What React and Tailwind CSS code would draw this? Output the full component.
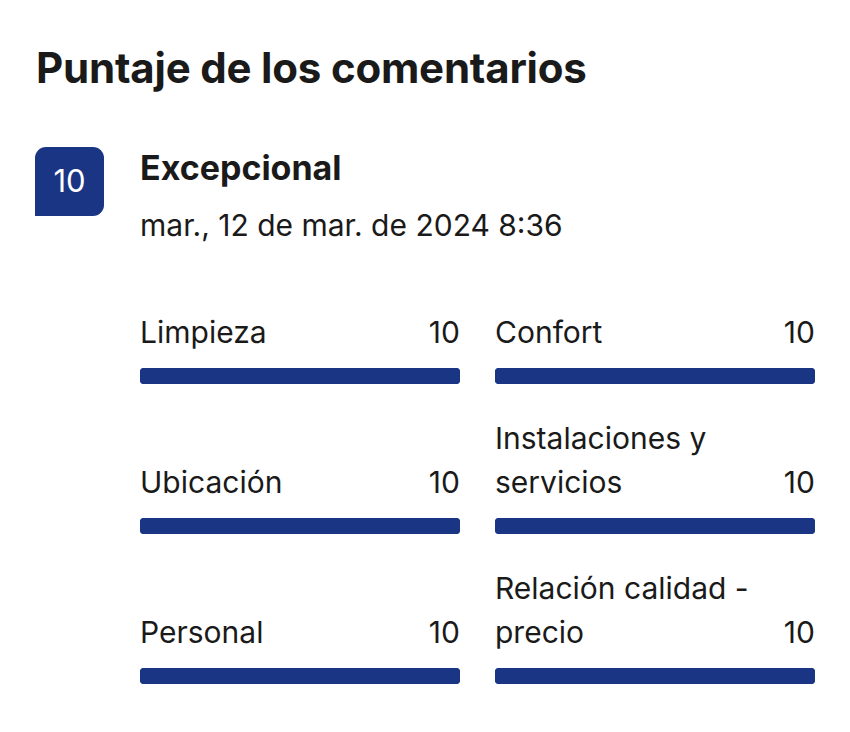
const scores = [
  { label: 'Limpieza', value: 10 },
  { label: 'Confort', value: 10 },
  { label: 'Ubicación', value: 10 },
  { label: 'Instalaciones y servicios', value: 10 },
  { label: 'Personal', value: 10 },
  { label: 'Relación calidad - precio', value: 10 },
];

function ScoreBar({ label, value }) {
  return (
    <div className="flex flex-col justify-end">
      <div className="flex items-end justify-between gap-4">
        <span className="leading-[44px]">{label}</span>
        <span className="leading-[44px] shrink-0">{value}</span>
      </div>
      <div className="mt-[14px] h-4 rounded-[4px] bg-[#1b3585]">
        <div className="h-full rounded-[4px] bg-[#1b3585]" style={{ width: `${value * 10}%` }} />
      </div>
    </div>
  );
}

export default function App() {
  return (
    <div className="min-h-[732px] w-[850px] bg-white px-[35px] pt-[40px] text-[#1a1a1a] font-['Inter',sans-serif]">
      <h1 className="pl-px text-[42px] font-bold leading-[56px] tracking-[-0.2px]">Puntaje de los comentarios</h1>

      <div className="mt-[50px] flex gap-9">
        <div className="mt-[1px] flex h-[69px] w-[69px] shrink-0 items-center justify-center rounded-t-[11px] rounded-br-[11px] bg-[#1b3585] text-[31px] text-white">
          10
        </div>
        <div className="flex-1">
          <h2 className="text-[34px] font-bold leading-[44px]">Excepcional</h2>
          <p className="mt-[15px] text-[30px] leading-[40px]">mar., 12 de mar. de 2024 8:36</p>

          <div className="mt-[65px] grid w-[675px] grid-cols-2 gap-x-[35px] gap-y-[32px] text-[30px]">
            {scores.map((s) => (
              <ScoreBar key={s.label} {...s} />
            ))}
          </div>
        </div>
      </div>
    </div>
  );
}
